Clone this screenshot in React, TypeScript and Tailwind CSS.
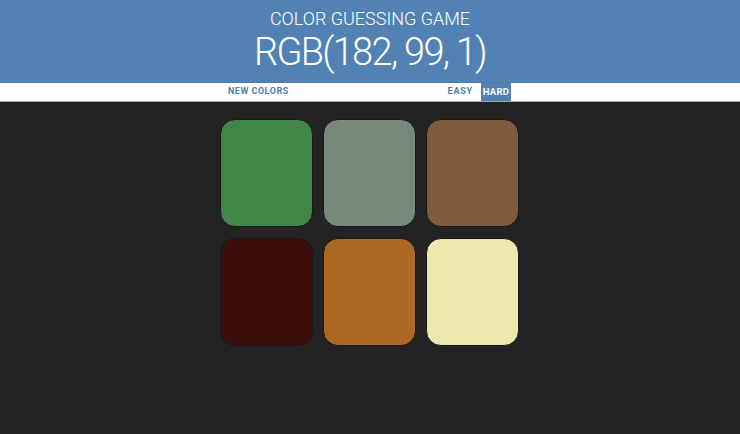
import React from "react";

const colors = ["#418548", "#76897b", "#7f5b3d", "#3c0e0b", "#ad6824", "#ede8ad"];

export default function App() {
  return (
    <div
      className="min-h-[434px] w-full bg-[#232323]"
      style={{ fontFamily: "Roboto, 'Liberation Sans', sans-serif" }}
    >
      <header className="h-[83px] bg-[#5282b4] border-b border-[#4a7bb0] flex flex-col items-center text-white">
        <h1 className="mt-[8px] text-[18px] leading-[22px] font-light">COLOR GUESSING GAME</h1>
        <div className="text-[38px] leading-[44px] font-light tracking-[-1.7px]">RGB(182, 99, 1)</div>
      </header>
      <nav className="h-[19px] bg-white border-b border-[#a8a8a8]">
        <div className="mx-auto w-[300px] h-full flex justify-between items-stretch">
          <button className="px-[8px] text-[9px] font-bold tracking-[0.5px] text-[#4f7db0]">NEW COLORS</button>
          <div className="flex items-stretch gap-[6px] mr-[9px]">
            <button className="px-[2px] text-[9px] font-bold tracking-[0.8px] text-[#4f7db0]">EASY</button>
            <button className="w-[30px] flex items-center justify-center text-[9.5px] font-bold tracking-[0.3px] bg-[#5282b4] text-white">HARD</button>
          </div>
        </div>
      </nav>
      <div className="mx-auto mt-[17px] w-[299px] -translate-x-[1px] grid grid-cols-3 gap-x-[10px] gap-y-[11px]">
        {colors.map((c) => (
          <div
            key={c}
            className="h-[108px] rounded-[15px] border border-[#161a1c]"
            style={{ backgroundColor: c }}
          />
        ))}
      </div>
    </div>
  );
}
